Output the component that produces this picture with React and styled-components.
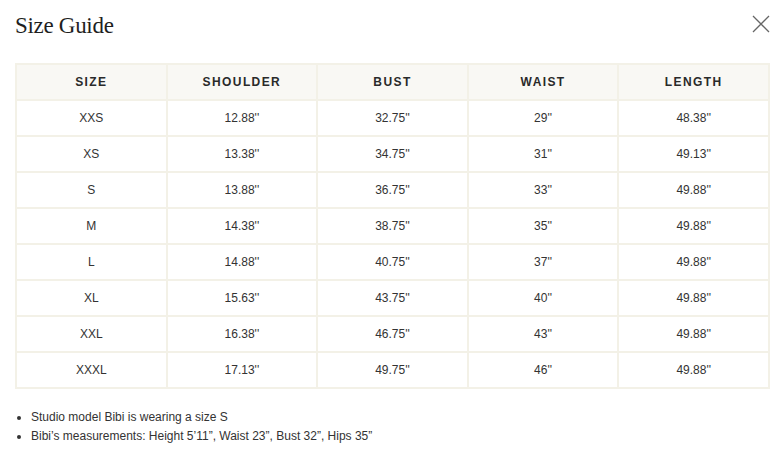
import React from "react";
import styled, { createGlobalStyle } from "styled-components";

const Global = createGlobalStyle`
  html, body { margin: 0; padding: 0; background: #fff; }
  body { font-family: "Liberation Sans", Arial, sans-serif; color: #2a2a2a; }
`;

const Modal = styled.div`
  width: 779px;
  box-sizing: border-box;
  padding: 12px 9px 0 15px;
`;

const Header = styled.div`
  display: flex;
  justify-content: space-between;
  align-items: flex-start;
  height: 51px;
`;

const Title = styled.h1`
  margin: 0;
  padding-top: 1px;
  font-family: "Liberation Serif", "DejaVu Serif", serif;
  font-weight: 400;
  font-size: 23px;
  letter-spacing: -0.3px;
  color: #1f1f1f;
`;

const Close = styled.button`
  border: 0;
  background: none;
  padding: 0;
  margin: 3px 0 0 0;
  width: 18px;
  height: 18px;
  cursor: pointer;
  display: flex;
`;

const Table = styled.table`
  width: 755px;
  border-collapse: collapse;
  table-layout: fixed;
  border: 2px solid #f3f1e7;
`;

const Th = styled.th`
  height: 34px;
  padding: 0;
  background: #f9f8f4;
  border: 2px solid #f3f1e7;
  font-size: 12px;
  font-weight: 700;
  letter-spacing: 1.4px;
  color: #2a2a2a;
  text-align: center;
`;

const Td = styled.td`
  height: 34px;
  padding: 0;
  border: 2px solid #f3f1e7;
  font-size: 12px;
  color: #333;
  text-align: center;
`;

const Notes = styled.ul`
  margin: 19px 0 0;
  padding: 0 0 0 16px;
  font-size: 12px;
  line-height: 19px;
  color: #333;
  list-style: disc;
`;

const cols = ["SIZE", "SHOULDER", "BUST", "WAIST", "LENGTH"];
const rows = [
  ["XXS", "12.88''", "32.75''", "29''", "48.38''"],
  ["XS", "13.38''", "34.75''", "31''", "49.13''"],
  ["S", "13.88''", "36.75''", "33''", "49.88''"],
  ["M", "14.38''", "38.75''", "35''", "49.88''"],
  ["L", "14.88''", "40.75''", "37''", "49.88''"],
  ["XL", "15.63''", "43.75''", "40''", "49.88''"],
  ["XXL", "16.38''", "46.75''", "43''", "49.88''"],
  ["XXXL", "17.13''", "49.75''", "46''", "49.88''"],
];

export default function App() {
  return (
    <>
      <Global />
      <Modal>
        <Header>
          <Title>Size Guide</Title>
          <Close aria-label="Close">
            <svg width="18" height="18" viewBox="0 0 18 18">
              <path d="M1 1L17 17M17 1L1 17" stroke="#666" strokeWidth="1.3" fill="none" />
            </svg>
          </Close>
        </Header>
        <Table>
          <thead>
            <tr>
              {cols.map((c) => (
                <Th key={c}>{c}</Th>
              ))}
            </tr>
          </thead>
          <tbody>
            {rows.map((r) => (
              <tr key={r[0]}>
                {r.map((v, i) => (
                  <Td key={i}>{v}</Td>
                ))}
              </tr>
            ))}
          </tbody>
        </Table>
        <Notes>
          <li>Studio model Bibi is wearing a size S</li>
          <li>Bibi’s measurements: Height 5’11”, Waist 23”, Bust 32”, Hips 35”</li>
        </Notes>
      </Modal>
    </>
  );
}
